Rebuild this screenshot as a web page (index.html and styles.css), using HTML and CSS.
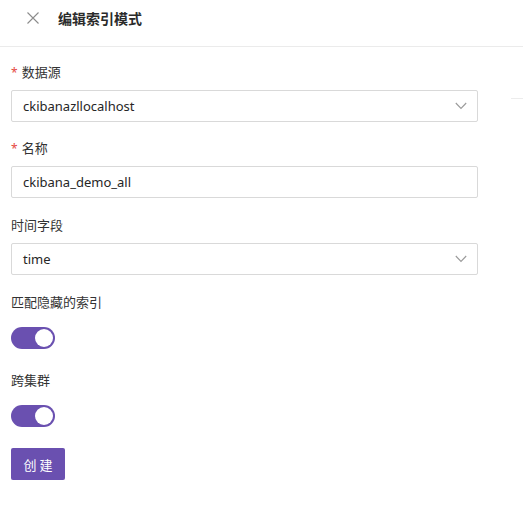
FILE: index.html
```html
<!DOCTYPE html>
<html lang="zh">
<head>
<meta charset="utf-8">
<link rel="stylesheet" href="styles.css">
</head>
<body>
<div class="drawer">
  <header class="drawer-header">
    <span class="close">
      <svg width="12" height="12" viewBox="0 0 12 12"><path d="M0.5 0.5L11.5 11.5M11.5 0.5L0.5 11.5" stroke="#8c8c8c" stroke-width="1.1" fill="none"/></svg>
    </span>
    <h1 class="title">编辑索引模式</h1>
  </header>
  <div class="sliver"></div>
  <form class="form">
    <div class="item">
      <label class="label"><span class="req">*</span>数据源</label>
      <div class="control select">
        <span class="value">ckibanazllocalhost</span>
        <svg class="arrow" width="12" height="8" viewBox="0 0 12 8"><path d="M0.8 1L6 6.5L11.2 1" stroke="#9a9a9a" stroke-width="1.1" fill="none"/></svg>
      </div>
    </div>
    <div class="item">
      <label class="label"><span class="req">*</span>名称</label>
      <div class="control input"><span class="value">ckibana_demo_all</span></div>
    </div>
    <div class="item">
      <label class="label">时间字段</label>
      <div class="control select">
        <span class="value">time</span>
        <svg class="arrow" width="12" height="8" viewBox="0 0 12 8"><path d="M0.8 1L6 6.5L11.2 1" stroke="#9a9a9a" stroke-width="1.1" fill="none"/></svg>
      </div>
    </div>
    <div class="item toggle-item">
      <label class="label">匹配隐藏的索引</label>
      <div class="switch-wrap"><span class="switch"><span class="knob"></span></span></div>
    </div>
    <div class="item toggle-item">
      <label class="label">跨集群</label>
      <div class="switch-wrap"><span class="switch"><span class="knob"></span></span></div>
    </div>
    <button type="button" class="btn">创 建</button>
  </form>
</div>
</body>
</html>
```
FILE: styles.css
```css
* { box-sizing: border-box; }
html, body { margin: 0; padding: 0; background: #fff; }
body {
  font-family: "Noto Sans", "Noto Sans CJK SC", sans-serif;
  font-size: 13px;
  color: #333;
}
.drawer { position: relative; width: 523px; }
.drawer-header {
  height: 47px;
  border-bottom: 1px solid #ebebeb;
  display: flex;
  align-items: center;
  padding-left: 27px;
  padding-bottom: 10px;
}
.close { display: flex; width: 12px; height: 12px; margin-right: 19px; }
.title {
  margin: 0;
  font-size: 14px;
  font-weight: 700;
  color: #2b2b2b;
  font-family: "Noto Sans CJK SC", sans-serif;
  line-height: 20px;
}
.sliver {
  position: absolute;
  left: 511px;
  top: 98px;
  width: 12px;
  height: 1px;
  background: #ececec;
}
.form { padding: 15px 0 0 11px; width: 478px; }
.item { margin-bottom: 17px; }
.item:first-child { margin-bottom: 16px; }
.label {
  display: block;
  height: 20px;
  line-height: 20px;
  margin-bottom: 8px;
  color: #333;
  font-family: "Noto Sans CJK SC", sans-serif;
  font-size: 13px;
}
.toggle-item .label { margin-bottom: 10px; }
.toggle-item { margin-bottom: 16px; }
.req { color: #e5483f; margin-right: 4px; font-family: "Noto Sans", sans-serif; font-size: 12px; }
.control {
  height: 32px;
  border: 1px solid #d9d9d9;
  border-radius: 2px;
  display: flex;
  align-items: center;
  padding: 0 11px;
  justify-content: space-between;
}
.value { font-size: 13px; color: #262626; }
.arrow { margin-right: -1px; }
.switch-wrap { height: 32px; display: flex; align-items: center; }
.switch {
  width: 44px;
  height: 22px;
  border-radius: 11px;
  background: #6a50b0;
  position: relative;
  display: block;
}
.knob {
  position: absolute;
  right: 2px;
  top: 2px;
  width: 18px;
  height: 18px;
  border-radius: 50%;
  background: #fff;
}
.btn {
  margin-top: 0;
  width: 54px;
  height: 32px;
  border: none;
  border-radius: 2px;
  background: #6a50b0;
  color: #fff;
  font-family: "Noto Sans CJK SC", sans-serif;
  font-size: 13px;
  padding: 0;
  box-shadow: 0 2px 0 rgba(0,0,0,0.045);
}
```
